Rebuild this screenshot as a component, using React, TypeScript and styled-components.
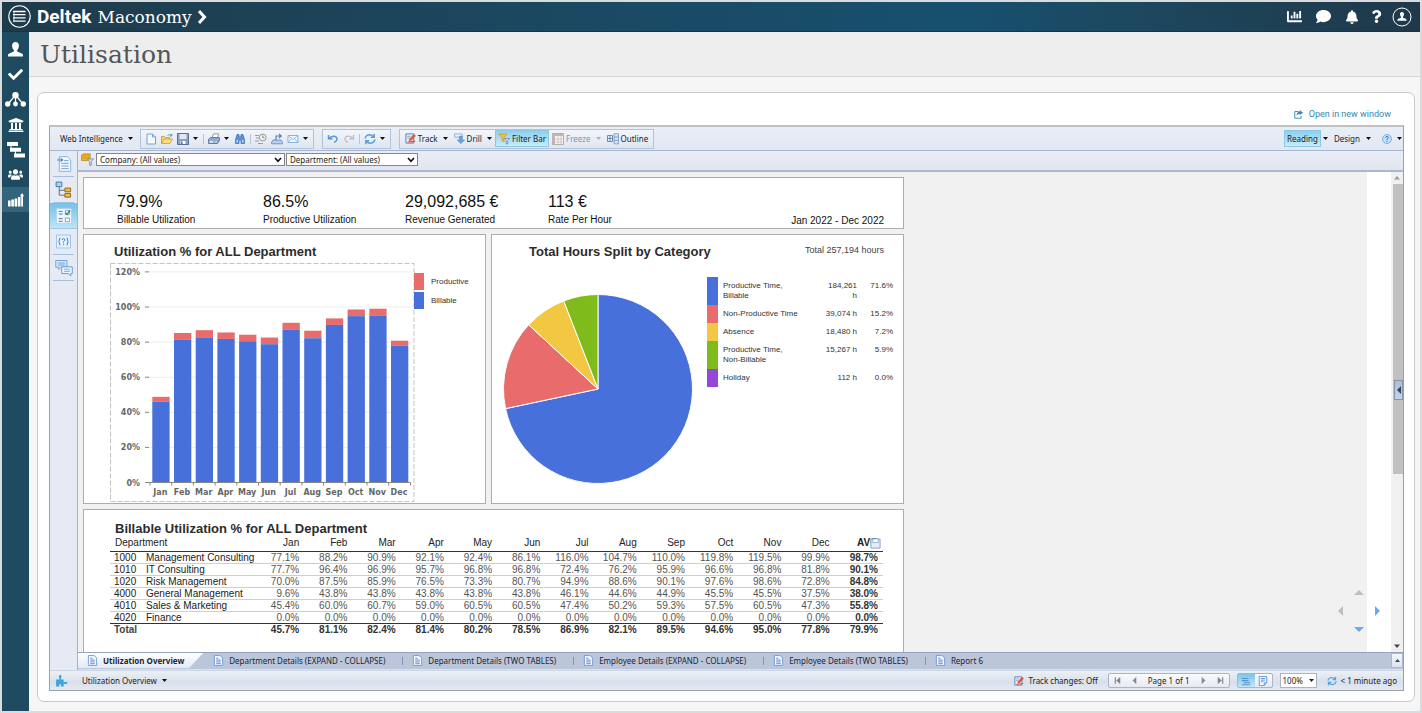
import React from "react";
import styled, { createGlobalStyle } from "styled-components";
import {
  FaBell,
  FaChartBar,
  FaCheck,
  FaComment,
  FaQuestion,
  FaUniversity,
  FaUsers,
} from "react-icons/fa";

const uiFont = `Tahoma, "Noto Sans", "Open Sans", sans-serif`;
const reportFont = `Arial, "Liberation Sans", sans-serif`;
const slabFont = `"Roboto Slab", "DejaVu Serif", serif`;

const GlobalStyle = createGlobalStyle`
  * { box-sizing: border-box; }
  body { margin: 0; background: #d9dbdc; }
  button, select { font: inherit; color: inherit; }
  button { border: 0; background: none; padding: 0; cursor: pointer; }
  h1, h2, p { margin: 0; }
  a { text-decoration: none; }
`;

/* ---------- application frame ---------- */

const Shell = styled.div`
  display: flex;
  flex-direction: column;
  height: 100vh;
  border: 2px solid #d9dbdc;
  font-family: ${uiFont};
  font-size: 8px;
  color: #222;
  overflow: hidden;
`;

const TopBar = styled.header`
  display: flex;
  align-items: center;
  justify-content: space-between;
  flex: none;
  height: 30px;
  padding: 0 3px 0 6px;
  color: #fff;
  background: linear-gradient(90deg, #1f3b4a 0%, #1c455c 28%, #17506f 68%, #1d465c 82%, #1f394a 100%);
  border-bottom: 1px solid #163447;
`;

const Brand = styled.div`
  display: flex;
  align-items: center;
  gap: 6px;
`;

const MenuButton = styled.button`
  display: flex;
  color: #fff;
`;

const BrandName = styled.span`
  display: flex;
  align-items: center;
  gap: 6px;
  font: 17px/24px ${slabFont};
  b { font: bold 19px/24px Roboto, sans-serif; }
`;

const TopActions = styled.nav`
  display: grid;
  grid-template-columns: 29px 29px 28px 20px 31px;
  align-items: center;
  justify-items: center;
  button { display: flex; color: #fff; }
`;

const Body = styled.div`
  display: flex;
  flex: 1;
  min-height: 0;
`;

const SideNav = styled.nav`
  display: flex;
  flex-direction: column;
  flex: none;
  width: 27px;
  padding-top: 5px;
  background: #1f4b60;
`;

const SideItem = styled.a<{ $active?: boolean }>`
  display: flex;
  align-items: center;
  justify-content: center;
  height: 25px;
  color: #fff;
  background: ${(p) => (p.$active ? "#33647b" : "transparent")};
`;

const Main = styled.main`
  display: flex;
  flex-direction: column;
  flex: 1;
  min-width: 0;
  background: #f6f6f6;
`;

const PageHeader = styled.div`
  flex: none;
  height: 45px;
  padding-left: 11px;
  background: #eeeeee;
  border-bottom: 1px solid #d8d8d8;
`;

const PageTitle = styled.h1`
  font: 25px/46px ${slabFont};
  color: #555;
`;

const CardArea = styled.div`
  display: flex;
  flex: 1;
  min-height: 0;
  padding: 15px 5px 9px 8px;
`;

const Card = styled.section`
  display: flex;
  flex-direction: column;
  flex: 1;
  min-width: 0;
  padding: 0 10px 10px 11px;
  background: #fff;
  border: 1px solid #c9c9c9;
  border-radius: 7px;
`;

const OpenRow = styled.div`
  display: flex;
  justify-content: flex-end;
  flex: none;
  height: 32px;
  padding: 10px 13px 0 0;
`;

const OpenLink = styled.a`
  display: flex;
  align-items: center;
  gap: 6px;
  font: 9px/22px Roboto, sans-serif;
  color: #3487ab;
`;

/* ---------- report viewer ---------- */

const Viewer = styled.div`
  display: flex;
  flex-direction: column;
  flex: 1;
  min-height: 0;
  border: 1px solid #9da0a6;
  border-top: 2px solid #c0c1c3;
`;

const ToolBar = styled.div`
  display: flex;
  align-items: center;
  flex: none;
  height: 24px;
  padding-left: 7px;
  background: linear-gradient(#e9eef7, #e1e8f3);
  border-bottom: 1px solid #a9b6cf;
`;

const ToolGroup = styled.div`
  display: flex;
  align-items: center;
  height: 20px;
  margin: 0 4px;
  padding: 0 2px;
  background: linear-gradient(#f2f5fb, #dfe6f1);
  border: 1px solid #b2c2db;
`;

const HelpGroup = styled.div`
  display: flex;
  margin-left: 6px;
  button:last-child { width: 8px; }
`;

const IconButton = styled.button`
  display: flex;
  align-items: center;
  justify-content: center;
  width: 16px;
  height: 16px;
`;

const LabelButton = styled.button<{ $on?: boolean; $faded?: boolean }>`
  display: flex;
  align-items: center;
  gap: 2px;
  height: 17px;
  padding: 0 2px;
  line-height: 15px;
  white-space: nowrap;
  color: ${(p) => (p.$faded ? "#8c93a0" : "#1c1c2c")};
  background: ${(p) => (p.$on ? "linear-gradient(#8ed0ef, #c6ecf8)" : "none")};
  border: 1px solid ${(p) => (p.$on ? "#8cc8e4" : "transparent")};
`;

const CaretButton = styled.button<{ $faded?: boolean }>`
  display: flex;
  align-items: center;
  justify-content: center;
  width: 10px;
  height: 16px;
  color: ${(p) => (p.$faded ? "#a9b0bd" : "#111")};
`;

const Divider = styled.span`
  width: 1px;
  height: 10px;
  margin: 0 2px;
  background: #b4c6de;
`;

const Spacer = styled.span`
  flex: 1;
`;

const Workspace = styled.div`
  display: flex;
  flex: 1;
  min-height: 0;
`;

const Rail = styled.nav`
  display: flex;
  flex-direction: column;
  flex: none;
  width: 28px;
  background: #e5eaf4;
  border-right: 1px solid #a3b3cd;
`;

const RailItem = styled.button<{ $on?: boolean }>`
  display: flex;
  align-items: center;
  justify-content: center;
  height: 26px;
  margin: ${(p) => (p.$on ? "0" : "0 3px")};
  background: ${(p) => (p.$on ? "linear-gradient(#72c1ea, #bfe4f5)" : "none")};
  border-bottom: 1px solid ${(p) => (p.$on ? "#9cc9e4" : "#a9c0da")};
`;

const Stage = styled.div`
  display: flex;
  flex-direction: column;
  flex: 1;
  min-width: 0;
`;

const FilterBar = styled.div`
  display: flex;
  align-items: center;
  flex: none;
  height: 21px;
  padding: 0 0 2px 1px;
  background: linear-gradient(#e9edf6, #e0e5ef);
  border-bottom: 2px solid #adb7d2;
`;

const FilterBox = styled.label<{ $width: number }>`
  position: relative;
  display: flex;
  align-items: center;
  width: ${(p) => p.$width}px;
  height: 13px;
  margin-left: 1px;
  background: #fff;
  border: 1px solid #85878c;
  select {
    appearance: none;
    width: 100%;
    height: 11px;
    padding: 0 0 0 3px;
    border: 0;
    line-height: 11px;
    background: none;
    color: #222;
  }
  svg { position: absolute; right: 2px; top: 3px; pointer-events: none; }
`;

const ReportArea = styled.div`
  position: relative;
  display: flex;
  flex: 1;
  min-height: 0;
  overflow: hidden;
  background: #fff;
`;

const ReportCanvas = styled.div`
  flex: 1;
  min-width: 0;
  margin-right: 24px;
  padding: 5px 0 0 5px;
  overflow: hidden;
  background: #f1f1f1;
`;

const ScrollTrack = styled.div`
  display: flex;
  flex-direction: column;
  justify-content: space-between;
  align-items: center;
  flex: none;
  width: 12px;
  padding: 3px 0;
  background: #f0f0f0;
`;

const ScrollThumb = styled.div`
  flex: 1;
  width: 10px;
  max-height: 290px;
  margin: 4px 0 auto 2px;
  background: #c1c1c1;
`;

const PanelHandle = styled.button`
  position: absolute;
  right: 0;
  top: 208px;
  display: flex;
  align-items: center;
  justify-content: center;
  width: 9px;
  height: 20px;
  background: linear-gradient(#a9bdda, #c6d3e6);
  border: 1px solid #8793a8;
`;

const PanPad = styled.div`
  position: absolute;
  right: 17px;
  bottom: 14px;
  display: grid;
  grid-template: 18px 18px 18px / 18px 18px 18px;
  justify-items: center;
  align-items: center;
  grid-template-areas: ". up ." "left . right" ". down .";
`;

const PanButton = styled.button<{ $area: string }>`
  display: flex;
  grid-area: ${(p) => p.$area};
`;

/* ---------- report sheet ---------- */

const Sheet = styled.div`
  display: flex;
  flex-direction: column;
  gap: 5px;
  width: 821px;
  font-family: ${reportFont};
  color: #222;
`;

const Panel = styled.section`
  background: #fff;
  border: 1px solid #acacac;
`;

const KpiPanel = styled(Panel)`
  display: grid;
  grid-template-columns: 146px 142px 143px 1fr auto;
  height: 52px;
  padding: 15px 19px 0 33px;
  font-size: 10px;
  line-height: 12px;
`;

const Kpi = styled.p`
  display: flex;
  flex-direction: column;
  gap: 3px;
  color: #111;
  b { font: 16px/18px ${reportFont}; }
`;

const Period = styled.p`
  padding-top: 22px;
  color: #111;
`;

const ChartRow = styled.div`
  display: grid;
  grid-template-columns: 403px 1fr;
  gap: 5px;
  height: 270px;
`;

const SectionTitle = styled.h2`
  font: bold 13px/14px ${reportFont};
  color: #2c2c2c;
`;

const BarPanel = styled(Panel)`
  padding: 10px 0 0 26px;
  ${SectionTitle} { padding: 0 0 4px 4px; }
`;

const BarBody = styled.div`
  display: flex;
  align-items: flex-start;
`;

const BarLegend = styled.ul`
  display: flex;
  flex-direction: column;
  gap: 2px;
  margin: 10px 0 0 -1px;
  padding: 0;
  list-style: none;
  font-size: 8px;
  color: #333;
  li { display: flex; align-items: center; gap: 7px; height: 17px; }
`;

const Swatch = styled.span<{ $color: string }>`
  width: 10px;
  height: 17px;
  background: ${(p) => p.$color};
`;

const PiePanel = styled(Panel)`
  padding: 10px 0 0;
`;

const PieHead = styled.div`
  display: flex;
  justify-content: space-between;
  padding: 0 19px 0 37px;
  p { font-size: 9px; line-height: 11px; color: #444; }
`;

const PieBody = styled.div`
  display: flex;
  align-items: flex-start;
  gap: 14px;
  padding: 18px 0 0 11px;
  > svg { margin-top: 17px; }
`;

const PieLegend = styled.table`
  table-layout: fixed;
  width: 186px;
  border-collapse: collapse;
  font-size: 8px;
  line-height: 10px;
  color: #333;
  td { padding: 4px 0; vertical-align: top; text-align: right; }
`;

const SwatchCell = styled.td<{ $color: string }>`
  background: ${(p) => p.$color};
`;

const NameCell = styled.th`
  padding: 4px 22px 4px 5px;
  font-weight: normal;
  text-align: left;
  vertical-align: top;
`;

const TablePanel = styled(Panel)`
  padding: 12px 20px 40px 26px;
  ${SectionTitle} { padding-left: 5px; }
`;

const DataTable = styled.table`
  table-layout: fixed;
  width: 100%;
  border-collapse: collapse;
  font-size: 10px;
  line-height: 11px;
  th, td { padding: 0 5px 0 0; text-align: right; font-weight: normal; white-space: nowrap; }
  thead th { height: 15px; line-height: 14px; color: #222; }
  thead th:first-child { padding-left: 5px; text-align: left; }
  thead th:last-child { font-weight: bold; }
  thead tr, tbody tr:last-child { border-bottom: 1px solid #333; }
  tbody tr { border-bottom: 1px solid #cfcfcf; }
  tbody td { height: 12px; color: #555; }
  tbody th { text-align: left; padding: 0 0 0 4px; color: #222; }
  tbody th + th { padding-left: 1px; }
  tbody td:last-child { font-weight: bold; color: #333; }
  tfoot th { text-align: left; padding-left: 4px; font-weight: bold; color: #444; }
  tfoot td { height: 13px; font-weight: bold; color: #333; }
`;

const AvgHead = styled.span`
  position: relative;
  svg { position: absolute; right: -3px; top: 1px; }
`;

/* ---------- sheet tabs and status bar ---------- */

const TabBar = styled.div`
  display: flex;
  flex: none;
  height: 18px;
  padding-bottom: 1px;
  border-top: 1px solid #93a4c0;
  background: #bbc6da;
  border-bottom: 1px solid #d9e2f0;
`;

const Tab = styled.button<{ $active?: boolean }>`
  position: relative;
  display: flex;
  align-items: center;
  gap: 5px;
  height: 15px;
  padding: ${(p) => (p.$active ? "0 19px 0 9px" : "0 17px 0 10px")};
  line-height: 15px;
  white-space: nowrap;
  font-weight: ${(p) => (p.$active ? "bold" : "normal")};
  color: #1d2432;
  background: ${(p) => (p.$active ? "linear-gradient(#ffffff, #e2eaf5)" : "none")};
  clip-path: ${(p) =>
    p.$active ? "polygon(0 0, 100% 0, calc(100% - 14px) 100%, 0 100%)" : "none"};
  &:nth-child(n + 3)::before {
    content: "";
    position: absolute;
    left: 0;
    top: 4px;
    width: 1px;
    height: 8px;
    background: #8495b3;
  }
`;

const TabMenu = styled.button`
  display: flex;
  align-items: center;
  justify-content: center;
  width: 12px;
  height: 15px;
  margin-left: auto;
  background: linear-gradient(#f5f8fc, #dbe3ef);
  border: 1px solid #a9b9d2;
`;

const StatusBar = styled.footer`
  display: flex;
  align-items: center;
  flex: none;
  height: 20px;
  padding: 0 6px 0 5px;
  background: linear-gradient(#ecf0f6, #d9e0eb 60%, #e4eaf3);
  border-top: 1px solid #cbd5e4;
  > svg { margin-right: 11px; }
`;

const StatusText = styled.span`
  display: flex;
  align-items: center;
  gap: 4px;
  line-height: 15px;
  white-space: nowrap;
  color: #222;
`;

const Pager = styled.div`
  display: flex;
  align-items: center;
  height: 15px;
  margin-right: 7px;
  line-height: 13px;
  white-space: nowrap;
  background: linear-gradient(#fafbfd, #e6eaf1);
  border: 1px solid #a9b4c6;
  border-radius: 2px;
  ${StatusText} + & { margin-left: 10px; }
  button { display: flex; align-items: center; justify-content: center; width: 17px; height: 13px; }
  span { padding: 0 5px; }
`;

const ModeButton = styled.button<{ $on?: boolean }>`
  && { background: ${(p) => (p.$on ? "linear-gradient(#7cc5e9, #c2e6f5)" : "none")}; }
`;

const ZoomSelect = styled.label`
  position: relative;
  display: flex;
  align-items: center;
  width: 37px;
  height: 15px;
  margin-right: 10px;
  background: #fff;
  border: 1px solid #a9b4c6;
  select { appearance: none; width: 100%; height: 13px; padding: 0 0 0 2px; border: 0; background: none; }
  svg { position: absolute; right: 2px; top: 5px; pointer-events: none; }
`;

/* ---------- icons ---------- */

const Caret = () => (
  <svg width="5" height="3" viewBox="0 0 5 3" aria-hidden="true">
    <path d="M0 0H5L2.500 3Z" fill="currentColor" />
  </svg>
);

const Chevron = () => (
  <svg width="8" height="6" viewBox="0 0 8 6" aria-hidden="true">
    <path d="M1 1L4 4.300L7 1" fill="none" stroke="#111" strokeWidth="1.700" />
  </svg>
);

const Triangle = ({ dir, color }: { dir: "up" | "down" | "left" | "right"; color: string }) => {
  const shapes = {
    up: "M0 6L5 1L10 6Z",
    down: "M0 2L5 7L10 2Z",
    left: "M6 0L1 5L6 10Z",
    right: "M2 0L7 5L2 10Z",
  };
  const tall = dir === "left" || dir === "right";
  return (
    <svg width={tall ? 8 : 10} height={tall ? 10 : 8} viewBox={tall ? "0 0 8 10" : "0 0 10 8"} aria-hidden="true">
      <path d={shapes[dir]} fill={color} />
    </svg>
  );
};

const glyphs: Record<string, React.ReactNode> = {
  new: <path d="M2 1H7.500L10.500 4V11H2ZM7.500 1V4H10.500" fill="#f4f9ff" stroke="#6ea2da" />,
  open: (
    <>
      <path d="M.5 10.500V3.500H3.500L4.500 4.500H8.500V6" fill="#f6d36b" stroke="#c39a3c" strokeWidth=".8" />
      <path d="M.5 10.500L3 6H11.500L9 10.500Z" fill="#ffdf7d" stroke="#c39a3c" strokeWidth=".8" />
      <path d="M6.500 2.500Q8.500 .5 10.500 2.500M10.800 .8V3H8.800" fill="none" stroke="#4a86c4" strokeWidth=".9" />
    </>
  ),
  save: (
    <>
      <path d="M.5 .5H11.500V11.500H.5Z" fill="#8c9fc2" stroke="#5d6f94" />
      <path d="M2.500 1H9.500V6H2.500Z" fill="#dfe8f5" />
      <path d="M3.500 8H8.500V11H3.500Z" fill="#ffffff" />
      <path d="M4 8.500H5.500V11H4Z" fill="#5d6f94" />
    </>
  ),
  print: (
    <>
      <path d="M4 5L5.500 .8H10.500L9.500 5Z" fill="#fff" stroke="#6a86ad" strokeWidth=".8" />
      <path d="M.5 9V6.500L2.500 4.500H11.500V7.500L9.500 10.500H.5Z" fill="#8fabd2" stroke="#4a699a" strokeWidth=".8" />
      <path d="M1.500 8H8.500V9.800H1.500Z" fill="#dce8f7" />
      <path d="M5 8.500H7.500V9.500H5Z" fill="#3da34d" />
    </>
  ),
  find: (
    <>
      <path d="M3 1.500H5V4H7V1.500H9L10.500 6.500V10.500H7V7H5V10.500H1.500V6.500Z" fill="#5b93d8" stroke="#346cb4" strokeWidth=".7" />
      <path d="M2.500 7H4V9.500H2.500ZM8 7H9.500V9.500H8Z" fill="#b9d6f7" />
    </>
  ),
  history: (
    <>
      <path d="M0 2.500H4M1 5H4M0 8H4M3 10.500H8" stroke="#9a9a9a" strokeWidth="1.200" />
      <circle cx="7.800" cy="4.500" r="3.400" fill="#f5f5f5" stroke="#949494" />
      <path d="M7.800 2.500V4.700H9.500" fill="none" stroke="#777" strokeWidth=".9" />
    </>
  ),
  send: (
    <>
      <path d="M.5 9.500L2 7H10L11.500 9.500V10.800H.5Z" fill="#b9cfea" stroke="#5a86bd" strokeWidth=".8" />
      <path d="M5 7V3H10M8 1L10.300 3L8 5" fill="none" stroke="#4b7fc0" strokeWidth="1.100" />
    </>
  ),
  mail: (
    <>
      <path d="M1 2.500H11V9.500H1Z" fill="#f0f7ff" stroke="#84b3e2" />
      <path d="M1 2.500L6 6.500L11 2.500M1 9.500L4.500 5.500M11 9.500L7.500 5.500" fill="none" stroke="#84b3e2" strokeWidth=".8" />
    </>
  ),
  undo: <path d="M1.500 2V5.800H5.500M2 5.500Q4 2.800 7.500 3.200Q10.800 4.200 9.800 7Q9 8.800 7 9.200" fill="none" stroke="#5597d8" strokeWidth="1.500" />,
  redo: <path d="M10.500 2V5.800H6.500M10 5.500Q8 2.800 4.500 3.200Q1.200 4.200 2.200 7Q3 8.800 5 9.200" fill="none" stroke="#bcbfc4" strokeWidth="1.400" />,
  refresh: (
    <path
      d="M1 5.500Q2 2 5.500 1.800Q8 1.800 9.500 3.500M10.200 .8V4.300H6.800M11 6.500Q10 10 6.500 10.200Q4 10.200 2.500 8.500M1.800 11.200V7.700H5.200"
      fill="none"
      stroke="#5a9fdd"
      strokeWidth="1.500"
    />
  ),
  track: (
    <>
      <path d="M1 1H9.500V11H1Z" fill="#eaf1fb" stroke="#4f77b5" />
      <path d="M2.500 3.500H6M2.500 5.500H5" stroke="#6f93c9" strokeWidth=".9" />
      <path d="M4.500 8.500L5 6.500L9.500 1.500L11.500 3L7 8Z" fill="#e8563f" stroke="#c8402b" strokeWidth=".5" />
      <path d="M3 10L11 9" stroke="#e8563f" strokeWidth="1.500" />
    </>
  ),
  drill: (
    <>
      <path d="M.5 1H9V4.500H.5Z" fill="#e6f0fb" stroke="#86a8d2" strokeWidth=".9" />
      <path d="M6 3.500H9V7.500H11.500L7.500 11.500L3.500 7.500H6Z" fill="#6aa3de" stroke="#3c79bd" strokeWidth=".6" />
    </>
  ),
  funnel: (
    <>
      <path d="M.5 1H9L6 4.500V9L4 7.500V4.500Z" fill="#f6c331" stroke="#c8912a" strokeWidth=".7" />
      <path d="M6.500 5.500H11.500L9.700 7.500V11H8.300V7.500Z" fill="#e3ebf7" stroke="#6f88ae" strokeWidth=".8" />
    </>
  ),
  dataFunnel: (
    <>
      <path d="M.5 2L2 .8H8.500V5.500L7 7H.5Z" fill="#f3b91f" stroke="#b8851a" strokeWidth=".7" />
      <path d="M.5 2.300H7V7M2.700 2.300V7M4.900 2.300V7M.5 4.500H7" fill="none" stroke="#c9962b" strokeWidth=".5" />
      <path d="M6 5.500H11.500L9.500 7.800V11.300H8V7.800Z" fill="#e3ebf7" stroke="#6f88ae" strokeWidth=".8" />
    </>
  ),
  freeze: (
    <>
      <path d="M.5 .5H11.500V11.500H.5Z" fill="#f7f7f7" stroke="#b0aeae" />
      <path d="M.5 1H11.500V3H.5ZM.5 1H3V11.500H.5Z" fill="#c6b7b3" />
      <path d="M3 6H11.500M3 9H11.500M6 3V11.500M9 3V11.500" stroke="#c6bebc" strokeWidth=".8" />
    </>
  ),
  outline: (
    <>
      <path d="M.5 2.500H5.500V8.500H.5ZM3 2.500V8.500M.5 5.500H5.500" fill="#e8f0fb" stroke="#6580ac" strokeWidth=".9" />
      <path d="M7 .8H11.500V10.800H7ZM7 4H11.500M7 7.500H11.500" fill="#d6e3f5" stroke="#7f9cc6" strokeWidth=".9" />
    </>
  ),
  help: (
    <>
      <circle cx="6" cy="6" r="4.500" fill="#c5e1fa" stroke="#78b0e6" />
      <path d="M4.600 4.800Q4.700 3.400 6 3.400Q7.400 3.500 7.300 4.700Q7.200 5.500 6 6.200V7.200M6 8V9" fill="none" stroke="#3a7cc8" />
    </>
  ),
  sheet: (
    <>
      <path d="M1.500 .5H7.500L10.500 3V11.500H1.500Z" fill="#f2f7ff" stroke="#6f9ad4" />
      <path d="M3.500 3.500H6M3.500 5.500H8.500M3.500 7.500H8.500M3.500 9.500H8.500" stroke="#5c83cd" strokeWidth="1" />
    </>
  ),
  quick: <path d="M1 3H9M1 5.500H9M3 8H11M1 10.500H11" stroke="#5790cf" strokeWidth="1.300" />,
  page: (
    <>
      <path d="M1.500 .5H10.500V8L7.500 11.500H1.500Z" fill="#f2f8ff" stroke="#4f88cd" />
      <path d="M3.500 3H8.500M3.500 5H8.500M3.500 7H6.500M7.500 11V8H10" fill="none" stroke="#4f88cd" />
    </>
  ),
  disk: (
    <>
      <path d="M1 1H11V11H1Z" fill="#e4eefa" stroke="#7ba0d0" />
      <path d="M3 1H9V5H3Z" fill="#fff" stroke="#7ba0d0" strokeWidth=".8" />
    </>
  ),
  puzzle: <path d="M1 5H4V4Q2.800 1 4.800 1Q6.800 1 5.600 4V5H8V7.500Q11.500 6.500 11.500 8.200Q11.500 9.800 8 9V11.500H5.500V9.500H4V11.500H1Z" fill="#3fa6dc" />,
  railReport: (
    <>
      <path d="M2.500 .5H8.500L11 3V11.500H2.500Z" fill="#f4f9ff" stroke="#7db0e0" strokeWidth=".7" />
      <path d="M.8 3H4.500M3.500 1.800L5 3L3.500 4.200" fill="none" stroke="#4a84c5" strokeWidth=".8" />
      <path d="M6 3.500H9.500M4 5.500H9.500M4 7.500H9.500M4 9.500H9.500" stroke="#6598cf" strokeWidth=".7" />
    </>
  ),
  railTree: (
    <>
      <path d="M3 4V10H7M3 6.500H7" fill="none" stroke="#5d6f8c" strokeWidth=".7" />
      <path d="M.8 .8H4.800V4H.8Z" fill="#a9d6f2" stroke="#3f78ae" strokeWidth=".7" />
      <path d="M7 5H11V7.600H7ZM7 8.800H11V11.400H7Z" fill="#f0bd43" stroke="#8f6b1e" strokeWidth=".7" />
    </>
  ),
  railControls: (
    <>
      <path d="M.4 .4H11.600V11.600H.4Z" fill="#eef6fd" stroke="#a7c9e8" strokeWidth=".5" />
      <path d="M2 2.500H5M2 4.500H5M2 8H5M2 10H5" stroke="#4d6d9c" strokeWidth=".7" />
      <path d="M7 2H10V5H7ZM7 7.500H10V10.300H7Z" fill="#fff" stroke="#6b8bbb" strokeWidth=".6" />
      <path d="M7 3.500L8.300 4.700L10.600 1.700" fill="none" stroke="#28994a" strokeWidth="1" />
    </>
  ),
  railPrompt: (
    <>
      <path d="M.4 .8H11.600V11.200H.4Z" fill="#e3f1fd" stroke="#86bbe8" strokeWidth=".6" />
      <path d="M3.200 3Q1.600 6 3.200 9M8.800 3Q10.400 6 8.800 9M4.900 4.800Q5 3.700 6 3.700Q7.200 3.800 7 4.900Q6.800 5.500 6 6V6.900M6 7.800V8.700" fill="none" stroke="#3a86cc" strokeWidth=".8" />
    </>
  ),
  railComments: (
    <>
      <path d="M.5 1H8V5.500H4L2.500 7V5.500H.5Z" fill="#cfe5f8" stroke="#6b9fd2" strokeWidth=".6" />
      <path d="M4.500 5.200H11.500V9.700H10.500V11.300L8.800 9.700H4.500Z" fill="#eef7ff" stroke="#5b93cc" strokeWidth=".6" />
      <path d="M2 2.700H6.500M2 4H6.500M6 6.800H10M6 8.200H10" stroke="#5b93cc" strokeWidth=".5" />
    </>
  ),
};

const Glyph = ({ name, size = 12 }: { name: string; size?: number }) => (
  <svg width={size} height={size} viewBox="0 0 12 12" aria-hidden="true">
    {glyphs[name]}
  </svg>
);

const PersonShape = () => (
  <path d="M8 0C10.500 0 11.800 1.800 11.600 4.200C11.500 6.200 10.700 7.600 9.800 8.500V10.200L14.600 12.200C15.500 12.600 16 13.200 16 14.200V15.500H0V14.200C0 13.200 .5 12.600 1.400 12.200L6.200 10.200V8.500C5.300 7.600 4.500 6.200 4.400 4.200C4.200 1.800 5.500 0 8 0Z" fill="currentColor" />
);

const sideItems: { label: string; icon: React.ReactNode; active?: boolean }[] = [
  {
    label: "Employee",
    icon: <svg width="15" height="15" viewBox="0 0 16 16"><PersonShape /></svg>,
  },
  {
    label: "Approvals",
    icon: <FaCheck size={15} />,
  },
  {
    label: "Structure",
    icon: (
      <svg width="21" height="15" viewBox="0 0 21 15">
        <path d="M10.500 3L3 12M10.500 3V12M10.500 3L18 12" stroke="#fff" strokeWidth="1.200" />
        <circle cx="10.500" cy="3.200" r="3.200" fill="#fff" />
        <circle cx="2.700" cy="12" r="2.700" fill="#fff" />
        <circle cx="10.500" cy="12" r="2.400" fill="#fff" />
        <circle cx="18.300" cy="12" r="2.700" fill="#fff" />
      </svg>
    ),
  },
  { label: "Finance", icon: <FaUniversity size={16} /> },
  {
    label: "Projects",
    icon: (
      <svg width="18" height="16" viewBox="0 0 18 16">
        <path d="M0 0H11V4H0ZM3 5.700H14V9.700H3ZM7 11.400H18V15.400H7Z" fill="#fff" />
        <path d="M4 4V7M8.500 9V13" stroke="#fff" />
      </svg>
    ),
  },
  { label: "Teams", icon: <FaUsers size={15} /> },
  {
    label: "Analytics",
    active: true,
    icon: (
      <svg width="16" height="14" viewBox="0 0 16 14">
        <path d="M0 7.500H2.600V13.500H0ZM3.300 6.500H5.900V13.500H3.300ZM6.600 5.500H9.200V13.500H6.600ZM9.900 4H12.500V13.500H9.900ZM13.200 3H15V13.500H13.200Z" fill="#fff" />
        <path d="M11.800 3.200L14.200 0L16 3.200Z" fill="#fff" />
      </svg>
    ),
  },
];

/* ---------- data ---------- */

const months = ["Jan", "Feb", "Mar", "Apr", "May", "Jun", "Jul", "Aug", "Sep", "Oct", "Nov", "Dec"];
const billable = [46, 81.3, 82.7, 81.8, 80.5, 78.8, 87.2, 82.2, 89.8, 94.8, 95.2, 77.9];
const productive = [48.8, 85.2, 86.8, 85.5, 84.2, 82.6, 91, 86.5, 93.5, 98.6, 99, 80.8];

const departments = [
  ["1000", "Management Consulting", "77.1% 88.2% 90.9% 92.1% 92.4% 86.1% 116.0% 104.7% 110.0% 119.8% 119.5% 99.9% 98.7%"],
  ["1010", "IT Consulting", "77.7% 96.4% 96.9% 95.7% 96.8% 96.8% 72.4% 76.2% 95.9% 96.6% 96.8% 81.8% 90.1%"],
  ["1020", "Risk Management", "70.0% 87.5% 85.9% 76.5% 73.3% 80.7% 94.9% 88.6% 90.1% 97.6% 98.6% 72.8% 84.8%"],
  ["4000", "General Management", "9.6% 43.8% 43.8% 43.8% 43.8% 43.8% 46.1% 44.6% 44.9% 45.5% 45.5% 37.5% 38.0%"],
  ["4010", "Sales & Marketing", "45.4% 60.0% 60.7% 59.0% 60.5% 60.5% 47.4% 50.2% 59.3% 57.5% 60.5% 47.3% 55.8%"],
  ["4020", "Finance", "0.0% 0.0% 0.0% 0.0% 0.0% 0.0% 0.0% 0.0% 0.0% 0.0% 0.0% 0.0% 0.0%"],
];
const totals = "45.7% 81.1% 82.4% 81.4% 80.2% 78.5% 86.9% 82.1% 89.5% 94.6% 95.0% 77.8% 79.9%".split(" ");

const slices = [
  { name: "Productive Time, Billable", hours: "184,261 h", share: 71.6, color: "#4770da" },
  { name: "Non-Productive Time", hours: "39,074 h", share: 15.2, color: "#e76c6b" },
  { name: "Absence", hours: "18,480 h", share: 7.2, color: "#f2c843" },
  { name: "Productive Time, Non-Billable", hours: "15,267 h", share: 5.9, color: "#80bb1c" },
  { name: "Holiday", hours: "112 h", share: 0, color: "#9447d8" },
];

/* ---------- charts ---------- */

const BarChart = () => {
  const base = 219.5;
  const unit = 35.1 / 20;
  return (
    <svg width="305" height="239" viewBox="0 0 305 239" role="img" aria-label="Utilization by month">
      <rect x=".5" y=".5" width="303.500" height="238" fill="none" stroke="#c4c4c4" strokeDasharray="5 2" />
      {[0, 20, 40, 60, 80, 100, 120].map((v) => {
        const y = base - v * unit;
        return (
          <g key={v}>
            <path d={`M39 ${y}H301`} stroke="#ececec" />
            <path d={`M35 ${y}H39`} stroke="#888" />
            <text x="30" y={y + 3} textAnchor="end" fontFamily="Verdana, 'DejaVu Sans', sans-serif" fontSize="8" fontWeight="bold" fill="#666">
              {v}%
            </text>
          </g>
        );
      })}
      {months.map((m, i) => {
        const x = 42.3 + i * 21.7;
        const top = productive[i] * unit;
        const low = billable[i] * unit;
        return (
          <g key={m}>
            <rect x={x} y={base - top} width="17.300" height={top - low} fill="#e76c6b" />
            <rect x={x} y={base - low} width="17.300" height={low} fill="#4770da" />
            <path d={`M${x - 2.3} ${base}v3`} stroke="#888" />
            <text x={x + 8} y="232" textAnchor="middle" fontFamily="Verdana, 'DejaVu Sans', sans-serif" fontSize="8" fontWeight="bold" fill="#666">
              {m}
            </text>
          </g>
        );
      })}
      <path d={`M39 ${base}H300.500v3`} fill="none" stroke="#888" />
    </svg>
  );
};

const PieChart = () => {
  let start = 0;
  const total = slices.reduce((sum, s) => sum + s.share, 0);
  const point = (t: number) => {
    const a = t * 2 * Math.PI;
    return `${95 + 94.5 * Math.sin(a)} ${95 - 94.5 * Math.cos(a)}`;
  };
  return (
    <svg width="190" height="190" viewBox="0 0 190 190" role="img" aria-label="Hours by category">
      {slices
        .filter((s) => s.share > 0)
        .map((s) => {
          const from = start;
          start += s.share / total;
          return (
            <path
              key={s.name}
              d={`M95 95L${point(from)}A94.5 94.5 0 ${start - from > 0.5 ? 1 : 0} 1 ${point(start)}Z`}
              fill={s.color}
              stroke="#fff"
            />
          );
        })}
    </svg>
  );
};

/* ---------- page ---------- */

const tabs = [
  "Utilization Overview",
  "Department Details (EXPAND - COLLAPSE)",
  "Department Details (TWO TABLES)",
  "Employee Details (EXPAND - COLLAPSE)",
  "Employee Details (TWO TABLES)",
  "Report 6",
];

const Tool = ({ name, label, size }: { name: string; label: string; size?: number }) => (
  <IconButton aria-label={label}>
    <Glyph name={name} size={size} />
  </IconButton>
);

const Drop = ({ label, faded }: { label: string; faded?: boolean }) => (
  <CaretButton aria-label={label} $faded={faded}>
    <Caret />
  </CaretButton>
);

const PagerArrow = ({ d, label }: { d: string; label: string }) => (
  <button aria-label={label}>
    <svg width="7" height="7" viewBox="0 0 7 7">
      <path d={d} fill="#7d8798" stroke="#7d8798" strokeWidth=".6" />
    </svg>
  </button>
);

export default function App() {
  return (
    <Shell>
      <GlobalStyle />
      <TopBar>
        <Brand>
          <MenuButton aria-label="Menu">
            <svg width="23" height="23" viewBox="0 0 23 23" fill="none" stroke="#fff">
              <circle cx="11.500" cy="11.500" r="10.700" strokeWidth="1.100" />
              <path d="M5 6.500H17.500M5 9.700H17.500M5 12.900H17.500M5 16.200H17.500" strokeWidth="1.300" />
              <path d="M6 6.500V16.200" strokeWidth=".8" />
            </svg>
          </MenuButton>
          <BrandName>
            <b>Deltek</b>
            Maconomy
            <svg width="9" height="14" viewBox="0 0 9 14" aria-hidden="true">
              <path d="M1 1L6.500 7L1 13" fill="none" stroke="#fff" strokeWidth="3" />
            </svg>
          </BrandName>
        </Brand>
        <TopActions>
          <button aria-label="Dashboards"><FaChartBar size={15} /></button>
          <button aria-label="Messages"><FaComment size={15} /></button>
          <button aria-label="Notifications"><FaBell size={14} /></button>
          <button aria-label="Help"><FaQuestion size={13} /></button>
          <button aria-label="Account">
            <svg width="20" height="20" viewBox="0 0 20 20">
              <circle cx="10" cy="10" r="9" fill="none" stroke="#fff" />
              <g transform="translate(5.500 5) scale(.56)"><PersonShape /></g>
            </svg>
          </button>
        </TopActions>
      </TopBar>

      <Body>
        <SideNav>
          {sideItems.map((item) => (
            <SideItem key={item.label} href="#" aria-label={item.label} $active={item.active}>
              {item.icon}
            </SideItem>
          ))}
        </SideNav>

        <Main>
          <PageHeader>
            <PageTitle>Utilisation</PageTitle>
          </PageHeader>
          <CardArea>
            <Card>
              <OpenRow>
                <OpenLink href="#">
                  <svg width="9" height="9" viewBox="0 0 12 12" aria-hidden="true">
                    <path d="M6 2H1V11H9.500V8" fill="none" stroke="#3487ab" strokeWidth="1.200" />
                    <path d="M7.500 0L12 3.500L7.500 7V5Q5 5 3.500 7.500Q3.500 2.500 7.500 2Z" fill="#3487ab" />
                  </svg>
                  Open in new window
                </OpenLink>
              </OpenRow>

              <Viewer>
                <ToolBar>
                  <LabelButton>Web Intelligence</LabelButton>
                  <Drop label="Web Intelligence menu" />
                  <ToolGroup>
                    <Tool name="new" label="New" />
                    <Tool name="open" label="Open" />
                    <Tool name="save" label="Save" />
                    <Drop label="Save options" />
                    <Divider />
                    <Tool name="print" label="Print" />
                    <Drop label="Print options" />
                    <Tool name="find" label="Find" />
                    <Divider />
                    <Tool name="history" label="History" />
                    <Tool name="send" label="Export" />
                    <Tool name="mail" label="Send" />
                    <Drop label="Send options" />
                  </ToolGroup>
                  <ToolGroup>
                    <Tool name="undo" label="Undo" />
                    <Tool name="redo" label="Redo" />
                    <Divider />
                    <Tool name="refresh" label="Refresh" />
                    <Drop label="Refresh options" />
                  </ToolGroup>
                  <ToolGroup>
                    <LabelButton><Glyph name="track" size={11} />Track</LabelButton>
                    <Drop label="Track options" />
                    <LabelButton><Glyph name="drill" size={11} />Drill</LabelButton>
                    <Drop label="Drill options" />
                    <LabelButton $on><Glyph name="funnel" size={12} />Filter Bar</LabelButton>
                    <LabelButton $faded><Glyph name="freeze" size={12} />Freeze</LabelButton>
                    <Drop label="Freeze options" faded />
                    <LabelButton><Glyph name="outline" size={12} />Outline</LabelButton>
                  </ToolGroup>
                  <Spacer />
                  <LabelButton $on>Reading</LabelButton>
                  <Drop label="Reading options" />
                  <LabelButton>Design</LabelButton>
                  <Drop label="Design options" />
                  <HelpGroup>
                    <Tool name="help" label="Help" />
                    <Drop label="Help options" />
                  </HelpGroup>
                </ToolBar>

                <Workspace>
                  <Rail>
                    <RailItem aria-label="Document summary"><Glyph name="railReport" size={16} /></RailItem>
                    <RailItem aria-label="Navigation map"><Glyph name="railTree" size={17} /></RailItem>
                    <RailItem aria-label="Input controls" $on><Glyph name="railControls" size={16} /></RailItem>
                    <RailItem aria-label="User prompts"><Glyph name="railPrompt" size={15} /></RailItem>
                    <RailItem aria-label="Comments"><Glyph name="railComments" size={18} /></RailItem>
                  </Rail>

                  <Stage>
                    <FilterBar>
                      <Tool name="dataFunnel" label="Filters" size={13} />
                      <FilterBox $width={189}>
                        <select aria-label="Company"><option>Company: (All values)</option></select>
                        <Chevron />
                      </FilterBox>
                      <FilterBox $width={132}>
                        <select aria-label="Department"><option>Department: (All values)</option></select>
                        <Chevron />
                      </FilterBox>
                    </FilterBar>

                    <ReportArea>
                      <ReportCanvas>
                        <Sheet>
                          <KpiPanel>
                            <Kpi><b>79.9%</b>Billable Utilization</Kpi>
                            <Kpi><b>86.5%</b>Productive Utilization</Kpi>
                            <Kpi><b>29,092,685 €</b>Revenue Generated</Kpi>
                            <Kpi><b>113 €</b>Rate Per Hour</Kpi>
                            <Period>Jan 2022 - Dec 2022</Period>
                          </KpiPanel>

                          <ChartRow>
                            <BarPanel>
                              <SectionTitle>Utilization % for ALL Department</SectionTitle>
                              <BarBody>
                                <BarChart />
                                <BarLegend>
                                  <li><Swatch $color="#e76c6b" />Productive</li>
                                  <li><Swatch $color="#4770da" />Billable</li>
                                </BarLegend>
                              </BarBody>
                            </BarPanel>
                            <PiePanel>
                              <PieHead>
                                <SectionTitle>Total Hours Split by Category</SectionTitle>
                                <p>Total 257,194 hours</p>
                              </PieHead>
                              <PieBody>
                                <PieChart />
                                <PieLegend>
                                  <colgroup>
                                    <col width="11" />
                                    <col width="105" />
                                    <col width="34" />
                                    <col />
                                  </colgroup>
                                  <tbody>
                                    {slices.map((s) => (
                                      <tr key={s.name}>
                                        <SwatchCell $color={s.color} />
                                        <NameCell scope="row">{s.name}</NameCell>
                                        <td>{s.hours}</td>
                                        <td>{s.share.toFixed(1)}%</td>
                                      </tr>
                                    ))}
                                  </tbody>
                                </PieLegend>
                              </PieBody>
                            </PiePanel>
                          </ChartRow>

                          <TablePanel>
                            <SectionTitle>Billable Utilization % for ALL Department</SectionTitle>
                            <DataTable>
                              <colgroup>
                                <col width="35" />
                                <col width="111" />
                                {totals.map((_, i) => <col key={i} />)}
                              </colgroup>
                              <thead>
                                <tr>
                                  <th colSpan={2}>Department</th>
                                  {months.map((m) => <th key={m}>{m}</th>)}
                                  <th><AvgHead>AVG<Glyph name="disk" size={11} /></AvgHead></th>
                                </tr>
                              </thead>
                              <tbody>
                                {departments.map(([code, name, values]) => (
                                  <tr key={code}>
                                    <th scope="row">{code}</th>
                                    <th>{name}</th>
                                    {values.split(" ").map((v, i) => <td key={i}>{v}</td>)}
                                  </tr>
                                ))}
                              </tbody>
                              <tfoot>
                                <tr>
                                  <th colSpan={2}>Total</th>
                                  {totals.map((v, i) => <td key={i}>{v}</td>)}
                                </tr>
                              </tfoot>
                            </DataTable>
                          </TablePanel>
                        </Sheet>
                      </ReportCanvas>
                      <ScrollTrack>
                        <svg width="6" height="5" viewBox="0 0 6 5"><path d="M0 4.500L3 1L6 4.500Z" fill="#9a9a9a" /></svg>
                        <ScrollThumb />
                        <svg width="6" height="5" viewBox="0 0 6 5"><path d="M0 .5H6L3 4Z" fill="#444" /></svg>
                      </ScrollTrack>
                      <PanelHandle aria-label="Open side panel">
                        <svg width="4" height="8" viewBox="0 0 4 8"><path d="M4 0V8L0 4Z" fill="#34455f" /></svg>
                      </PanelHandle>
                      <PanPad>
                        <PanButton $area="up" aria-label="Pan up"><Triangle dir="up" color="#bcbfc3" /></PanButton>
                        <PanButton $area="left" aria-label="Pan left"><Triangle dir="left" color="#bcbfc3" /></PanButton>
                        <PanButton $area="right" aria-label="Pan right"><Triangle dir="right" color="#6aaaf0" /></PanButton>
                        <PanButton $area="down" aria-label="Pan down"><Triangle dir="down" color="#6aaaf0" /></PanButton>
                      </PanPad>
                    </ReportArea>

                    <TabBar>
                      {tabs.map((t, i) => (
                        <Tab key={t} $active={i === 0}>
                          <Glyph name="sheet" size={11} />
                          {t}
                        </Tab>
                      ))}
                      <TabMenu aria-label="All reports">
                        <svg width="5" height="3" viewBox="0 0 5 3"><path d="M0 3L2.500 0L5 3Z" fill="#34455f" /></svg>
                      </TabMenu>
                    </TabBar>
                  </Stage>
                </Workspace>

                <StatusBar>
                  <Glyph name="puzzle" size={13} />
                  <LabelButton>Utilization Overview</LabelButton>
                  <Drop label="Choose report" />
                  <Spacer />
                  <StatusText><Glyph name="track" size={10} />Track changes: Off</StatusText>
                  <Pager>
                    <PagerArrow label="First page" d="M1 .5H1.500V6.500H1ZM6 .5V6.500L2.500 3.500Z" />
                    <PagerArrow label="Previous page" d="M5 .5V6.500L2 3.500Z" />
                    <span>Page 1 of 1</span>
                    <PagerArrow label="Next page" d="M2 .5V6.500L5 3.500Z" />
                    <PagerArrow label="Last page" d="M1 .5V6.500L4.500 3.500ZM5.500 .5H6V6.500H5.500Z" />
                  </Pager>
                  <Pager>
                    <ModeButton $on aria-label="Quick display mode"><Glyph name="quick" size={10} /></ModeButton>
                    <ModeButton aria-label="Page mode"><Glyph name="page" size={10} /></ModeButton>
                  </Pager>
                  <ZoomSelect>
                    <select aria-label="Zoom"><option>100%</option></select>
                    <Caret />
                  </ZoomSelect>
                  <StatusText><Glyph name="refresh" size={10} />&lt; 1 minute ago</StatusText>
                </StatusBar>
              </Viewer>
            </Card>
          </CardArea>
        </Main>
      </Body>
    </Shell>
  );
}
